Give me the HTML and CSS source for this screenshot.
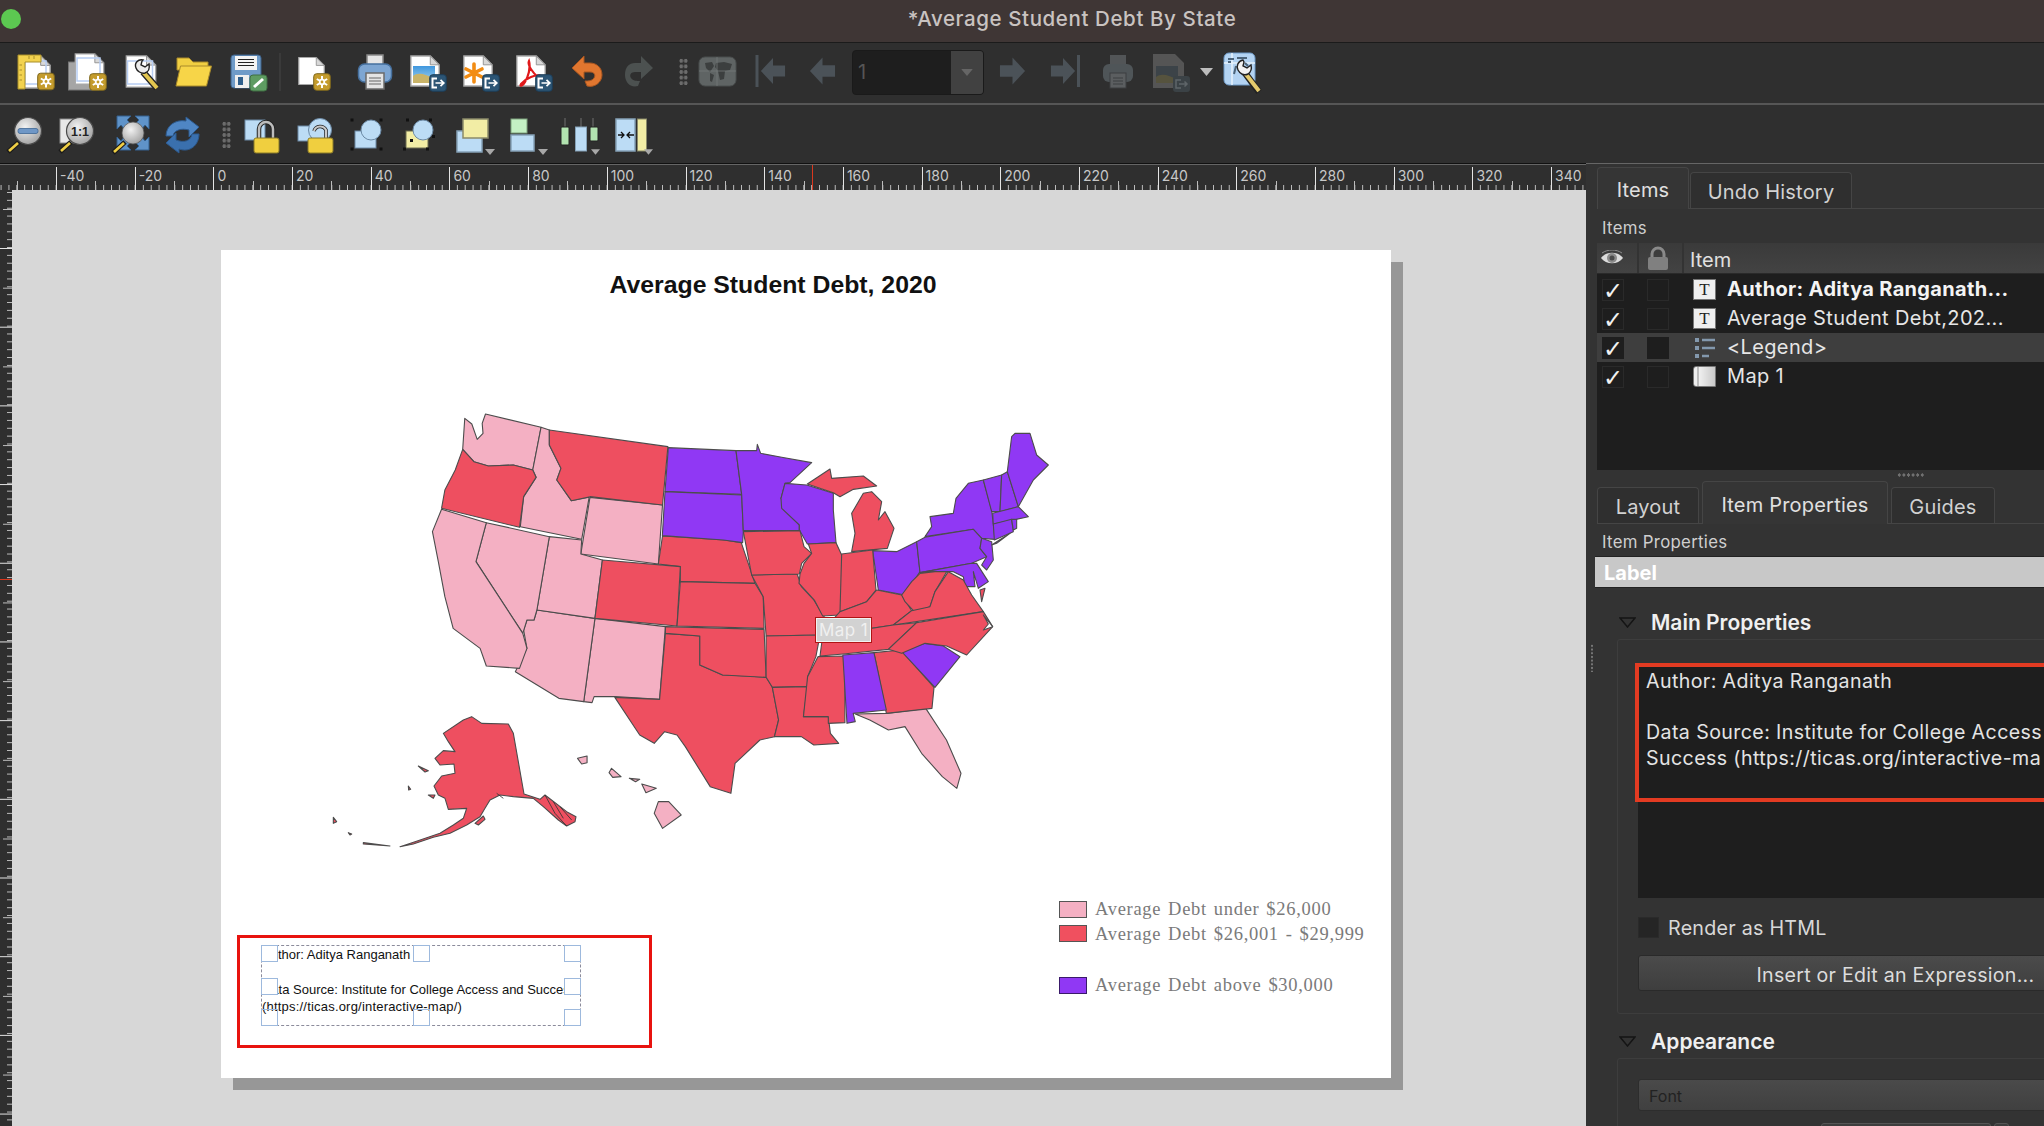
FILE: index.html
```html
<!DOCTYPE html>
<html lang="en">
<head>
<meta charset="utf-8">
<title>*Average Student Debt By State</title>
<link rel="stylesheet" href="styles.css">
</head>
<body>
<svg class="defs" aria-hidden="true">
  <defs>
    <radialGradient id="lensFill" cx="40%" cy="35%" r="75%"><stop offset="0" stop-color="#f2f2f2"/><stop offset="1" stop-color="#9a9a9a"/></radialGradient>
    <linearGradient id="sky" x1="0" y1="0" x2="0" y2="1"><stop offset="0" stop-color="#3f97de"/><stop offset="1" stop-color="#a8d4f0"/></linearGradient>
    <symbol id="doc" viewBox="0 0 34 36"><path d="M1 1H23L33 11V35H1Z" fill="#fff" stroke="#a8a8a8" stroke-width="1.5"/><path d="M23 1V11H33Z" fill="#d8d8d8" stroke="#8c8c8c"/></symbol>
    <symbol id="gear" viewBox="0 0 18 18"><rect x=".7" y=".7" width="16.6" height="16.6" rx="3" fill="#c49c2d" stroke="#7e671d"/><path d="M9 3V15M3.8 6L14.2 12M3.8 12L14.2 6" stroke="#fff" stroke-width="2"/><circle cx="9" cy="9" r="3.2" fill="#fff"/><circle cx="9" cy="9" r="1.4" fill="#c49c2d"/></symbol>
    <symbol id="export" viewBox="0 0 18 18"><rect x=".7" y=".7" width="16.6" height="16.6" rx="3" fill="#2c5575" stroke="#1d3e58"/><path d="M8 4.5H3.5V13.5H8" fill="none" stroke="#fff" stroke-width="2"/><path d="M6.5 9H14.5M11.5 5.8L14.8 9L11.5 12.2" fill="none" stroke="#fff" stroke-width="1.7"/></symbol>
    <symbol id="lens" viewBox="0 0 40 40"><path d="M14 27L3 37" stroke="#1a1a1a" stroke-width="5"/><path d="M13 28L4 36" stroke="#f0cf45" stroke-width="2.6"/><circle cx="23" cy="16" r="13.5" fill="url(#lensFill)" stroke="#4a4a4a" stroke-width="1.2"/></symbol>
    <symbol id="tri" viewBox="0 0 10 6"><path d="M0 0H10L5 6Z" fill="#a8a8a8"/></symbol>
    <symbol id="arrowR" viewBox="0 0 28 30"><path d="M1 9H14V1L27 15L14 29V21H1Z" fill="#4b5258"/></symbol>
  </defs>
</svg>

<header class="titlebar">
  <span class="traffic"></span>
  <h1 class="window-title">*Average Student Debt By State</h1>
</header>

<div class="toolbar toolbar-top">
  <svg class="ti gap16" viewBox="0 0 40 40"><use href="#doc" x="2" y="3" width="34" height="34"/><rect x="9" y="9" width="21" height="23" fill="none" stroke="#b7cdf2" stroke-width="1.5"/><path d="M2 3H25V10H9V37H2Z" fill="#f2d24f" stroke="#a98f2a"/><path d="M3.5 13H6M3.5 18H6M3.5 23H6M3.5 28H6M13 4V7M18 4V7" stroke="#a98f2a"/><use href="#gear" x="21" y="20" width="18" height="19"/></svg>
  <svg class="ti gap11" viewBox="0 0 40 40"><rect x="1.5" y="10" width="30" height="28" fill="#a5a5a5" stroke="#777"/><use href="#doc" x="6" y="1" width="33" height="32"/><rect x="10" y="6" width="23" height="23" fill="none" stroke="#b7cdf2" stroke-width="1.5"/><use href="#gear" x="22" y="21" width="18" height="18"/></svg>
  <svg class="ti gap15" viewBox="0 0 40 40"><use href="#doc" x="2" y="3" width="34" height="33"/><rect x="5.500" y="9" width="25" height="23" fill="none" stroke="#b7cdf2" stroke-width="1.5"/><path d="M21 20L35 36" stroke="#222" stroke-width="6.500"/><path d="M21 20L35 36" stroke="#e3c64f" stroke-width="4"/><path d="M21 8C16 7 12 11 14 16C15 19 19 22 23 21C26 20 28 17 27 12L23 15L19 13L20 9Z" fill="#ececec" stroke="#222" stroke-width="1.4"/></svg>
  <svg class="ti gap11" viewBox="0 0 40 40"><path d="M4 6H16L20 10H35V18H4Z" fill="#f1cf42" stroke="#a98a2a"/><path d="M7.500 14H38.500L33.500 34H3Z" fill="#f7d548" stroke="#a98a2a"/></svg>
  <svg class="ti gap15" viewBox="0 0 40 40"><rect x="3" y="3" width="30" height="33" rx="3" fill="#6f9bc8" stroke="#3e628a"/><rect x="7" y="4" width="22" height="14" fill="#f4f4f4"/><path d="M10 7.500H26M10 10.500H26M10 13.500H26" stroke="#222"/><rect x="7" y="23" width="14" height="13" fill="#efefef"/><rect x="10" y="25" width="5" height="8" fill="#2f5f8c"/><rect x="22" y="23" width="17" height="16" rx="3" fill="#5e9c62" stroke="#3e6e42"/><path d="M26 35L35 27" stroke="#fff" stroke-width="3"/></svg>
  <span class="tsep gap11"></span>
  <svg class="ti gap12" viewBox="0 0 40 40"><use href="#doc" x="5" y="2" width="27" height="34"/><use href="#gear" x="20" y="21" width="18" height="18"/></svg>
  <svg class="ti gap21" viewBox="0 0 40 40"><rect x="13" y="3" width="16" height="13" fill="#e6e6e6" stroke="#8a8a8a" stroke-width="1.5"/><rect x="4.500" y="12" width="33" height="18" rx="6" fill="#7ea6d2" stroke="#46709e" stroke-width="1.5"/><rect x="12" y="21" width="18" height="16" fill="#e4e4e4" stroke="#6b6b6b" stroke-width="1.5"/><path d="M15 26H27M15 29H27M15 32H27" stroke="#666" stroke-width="1.2"/></svg>
  <svg class="ti gap14" viewBox="0 0 40 40"><use href="#doc" x="2" y="2" width="30" height="34"/><rect x="5" y="14" width="22" height="17" fill="url(#sky)"/><path d="M5 31V24C10 20 17 22 27 27V31Z" fill="#c9b469"/><use href="#export" x="21" y="22" width="18" height="18"/></svg>
  <svg class="ti gap13" viewBox="0 0 40 40"><use href="#doc" x="2" y="2" width="30" height="34"/><path d="M13 12V30M5 17L21 25M5 25L21 17" stroke="#f28c13" stroke-width="3.600" stroke-linecap="round"/><use href="#export" x="21" y="22" width="18" height="18"/></svg>
  <svg class="ti gap13" viewBox="0 0 40 40"><use href="#doc" x="2" y="2" width="30" height="34"/><path d="M15 9C13 13 19 21 24 25C26 26 29 26 27 24C22 22 12 26 7 32C5 35 9 34 11 30C14 25 17 16 15 9Z" fill="none" stroke="#e0191b" stroke-width="2.200"/><use href="#export" x="21" y="22" width="18" height="18"/></svg>
  <svg class="ti gap12" viewBox="0 0 40 40"><path d="M18 4L6 16L18 27V20H24C28 20 30 23 28 26C26 29 22 29 19 29L21 34C29 36 36 30 36 23C36 15 30 11 24 11H18Z" fill="#e0762f" stroke="#a85620"/></svg>
  <svg class="ti gap14" viewBox="0 0 40 40"><path d="M21 4L33 16L21 27V20H15C11 20 9 23 11 26C13 29 17 29 20 29L18 34C10 36 5 30 5 23C5 15 9 11 15 11H21Z" fill="#4c5150"/></svg>
  <span class="grip gap19"></span>
  <svg class="ti gap9" viewBox="0 0 40 40"><rect x="2" y="5" width="37" height="29" rx="6" fill="#5f6464" stroke="#4a4e4e"/><path d="M8 11L15 10L17 14L13 20L9 16ZM19 11L27 10L35 12L33 18L28 19L27 27L23 28L21 19L18 15ZM13 21L17 23L15 30L13 29Z" fill="#3c3f3f"/><path d="M2 19H39M20 5V34" stroke="#757a7a" stroke-width=".8"/></svg>
  <svg class="ti gap14" viewBox="0 0 40 40"><rect x="4.500" y="3" width="3" height="32" fill="#4b5258"/><use href="#arrowR" x="9" y="4" width="26" height="30" transform="rotate(180 22 19)"/></svg>
  <svg class="ti gap11" viewBox="0 0 40 40"><use href="#arrowR" x="7" y="4" width="27" height="30" transform="rotate(180 20.500 19)"/></svg>
  <div class="pager gap10"><span class="pager-value">1</span><span class="pager-btn"><svg class="pager-arrow" viewBox="0 0 10 6"><use href="#tri"/></svg></span></div>
  <svg class="ti gap8" viewBox="0 0 40 40"><use href="#arrowR" x="7" y="4" width="27" height="30"/></svg>
  <svg class="ti gap13" viewBox="0 0 40 40"><use href="#arrowR" x="5" y="4" width="26" height="30"/><rect x="32" y="3" width="3" height="32" fill="#4b5258"/></svg>
  <svg class="ti gap13" viewBox="0 0 40 40"><rect x="12" y="3" width="16" height="13" fill="#525557"/><rect x="5" y="12" width="30" height="18" rx="6" fill="#4f5558"/><rect x="12" y="21" width="16" height="15" fill="#5b5e60" stroke="#3c3e40"/><path d="M15 26H25M15 29H25M15 32H25" stroke="#3c3e40"/></svg>
  <svg class="ti gap13" viewBox="0 0 40 40"><path d="M2 2H24L33 11V36H2Z" fill="#555"/><rect x="5" y="14" width="22" height="17" fill="#3c4348"/><path d="M5 31V25C10 21 18 23 27 28V31Z" fill="#56533e"/><rect x="22" y="24" width="17" height="16" rx="3" fill="#3b4246"/><path d="M30 28H25V36H30M28 32H36M33.500 29.500L36 32L33.500 34.500" fill="none" stroke="#5f6569" stroke-width="1.500"/></svg>
  <svg class="menu-arrow gap9" viewBox="0 0 10 6"><path d="M0 0H10L5 6Z" fill="#bdbdbd"/></svg>
  <svg class="ti gap10" viewBox="0 0 40 40"><rect x="1" y="1" width="31" height="32" rx="5" fill="#b3d3f2" stroke="#6f9bc8"/><path d="M9 1V33M1 11H32" stroke="#e6f2fb" stroke-width="1.500"/><path d="M5 7H11M14 6H24M13 14L11 22M22 11L25 14M5 10H8" stroke="#4c647a" stroke-width="2"/><path d="M22 21L36 40" stroke="#222" stroke-width="6.500"/><path d="M22 21L36 39" stroke="#e5ca6c" stroke-width="4"/><path d="M20 8C15 9 13 14 15 18C17 22 21 24 25 22C28 20 29 17 28 13L24 16L20 14L21 10Z" fill="#f2f2f2" stroke="#222" stroke-width="1.400"/></svg>
</div>

<div class="toolbar toolbar-bottom">
  <svg class="ti gap5" viewBox="0 0 40 40"><use href="#lens" width="40" height="40"/><rect x="13" y="13.500" width="20" height="5" rx="2" fill="#6f97c6" stroke="#3f6794" stroke-width=".8"/></svg>
  <svg class="ti gap12" viewBox="0 0 40 40"><rect x="3" y="4" width="19" height="24" fill="#e8e8e8" stroke="#8a8a8a"/><use href="#lens" width="40" height="40"/><text class="lens-text" x="23" y="21">1:1</text></svg>
  <svg class="ti gap13" viewBox="0 0 40 40"><g fill="#5f93c9" stroke="#34618f"><polygon points="7,1 21,1 17,5 21,9 15,15 11,10 7,14"/><polygon points="39,1 25,1 29,5 25,9 31,15 35,10 39,14"/><polygon points="7,35 21,35 17,31 21,27 15,21 11,26 7,22"/><polygon points="39,35 25,35 29,31 25,27 31,21 35,26 39,22"/></g><path d="M15 27L3 38" stroke="#1a1a1a" stroke-width="5"/><path d="M14 28L4 37" stroke="#f0cf45" stroke-width="2.600"/><circle cx="23" cy="18" r="11" fill="url(#lensFill)" stroke="#555" stroke-width=".8"/></svg>
  <svg class="ti gap13" viewBox="0 0 40 40"><path d="M3 21C3 11 12 4 23 6V2L36 12L26 22V15C18 13 11 15 10 21Z" fill="#4f86c4" stroke="#2d5a8e"/><path d="M36 19C36 30 27 38 16 34V38L3 28L13 18V25C21 28 28 26 29 19Z" fill="#3a70ae" stroke="#2d5a8e"/></svg>
  <span class="grip gap19"></span>
  <svg class="ti gap11" viewBox="0 0 40 40"><rect x="3" y="5" width="20" height="20" fill="#bcdcf5" stroke="#6c8aa6"/><path d="M17 24V14A7 7 0 0 1 31 14V24" fill="none" stroke="#222" stroke-width="4.500"/><path d="M17 24V14A7 7 0 0 1 31 14V24" fill="none" stroke="#bdbdbd" stroke-width="2.500"/><rect x="12" y="23" width="25" height="15" rx="2" fill="#f0cf3f" stroke="#8a7a28"/></svg>
  <svg class="ti gap13" viewBox="0 0 40 40"><rect x="3" y="11" width="15" height="15" fill="#bcdcf5" stroke="#6c8aa6"/><circle cx="25" cy="15" r="11.500" fill="#bcdcf5" stroke="#6c8aa6"/><path d="M19 16A6.500 6.500 0 0 1 31 15V24" fill="none" stroke="#222" stroke-width="3.500"/><path d="M19 16A6.500 6.500 0 0 1 31 15V24" fill="none" stroke="#c9c9c9" stroke-width="2"/><rect x="13" y="23" width="25" height="15" rx="2" fill="#f0cf3f" stroke="#8a7a28"/></svg>
  <svg class="ti gap12" viewBox="0 0 40 40"><rect x="8" y="16" width="21" height="17" fill="#bcdcf5" stroke="#6c8aa6"/><circle cx="24" cy="15" r="10" fill="#bcdcf5" stroke="#6c8aa6"/><g fill="#111"><rect x="3.500" y="3.500" width="3" height="3"/><rect x="32.500" y="3.500" width="3" height="3"/><rect x="3.500" y="32.500" width="3" height="3"/><rect x="32.500" y="32.500" width="3" height="3"/></g></svg>
  <svg class="ti gap13" viewBox="0 0 40 40"><rect x="6" y="16" width="22" height="17" fill="#f2eda5" stroke="#6c6c50"/><circle cx="23" cy="15" r="10" fill="#bcdcf5" stroke="#6c8aa6"/><g fill="#111"><rect x="6" y="3.500" width="3" height="3"/><rect x="29" y="3.500" width="3" height="3"/><rect x="3" y="32.500" width="3" height="3"/><rect x="26" y="32.500" width="3" height="3"/><rect x="32" y="20" width="3" height="3"/><rect x="10" y="24" width="3" height="3"/></g></svg>
  <svg class="ti gap16" viewBox="0 0 40 40"><rect x="1" y="16" width="25" height="21" fill="#bcdcf5" stroke="#86a2b8" stroke-width="1.500"/><rect x="7" y="4" width="25" height="19" fill="#f2eda5" stroke="#8a8a6a" stroke-width="1.500"/><use href="#tri" x="29" y="34" width="10" height="6"/></svg>
  <svg class="ti gap14" viewBox="0 0 40 40"><rect x="1" y="4" width="16" height="14" fill="#c4f0c4" stroke="#7fa37f"/><rect x="1" y="20" width="23" height="16" fill="#bcdcf5" stroke="#86a2b8" stroke-width="1.500"/><use href="#tri" x="28" y="34" width="10" height="6"/></svg>
  <svg class="ti gap10" viewBox="0 0 40 40"><path d="M5 3V12M21 3V12M33 3V12" stroke="#666" stroke-width="1.200"/><rect x="1" y="12" width="8" height="18" rx="1" fill="#b2e3b0" stroke="#222"/><rect x="15.500" y="12" width="11" height="24" fill="#bcdcf5" stroke="#86a2b8"/><rect x="30" y="12" width="8" height="14" rx="1" fill="#b2e3b0" stroke="#222"/><use href="#tri" x="31" y="34" width="9" height="6"/></svg>
  <svg class="ti gap15" viewBox="0 0 40 40"><rect x="1" y="4" width="19" height="32" fill="#bcdcf5" stroke="#86a2b8" stroke-width="1.500"/><rect x="22.500" y="4" width="9" height="32" fill="#f2eda5" stroke="#8a8a6a"/><path d="M3 20H9M6 17L9 20L6 23M19 20H12M15 17L12 20L15 23" fill="none" stroke="#111" stroke-width="1.300"/><use href="#tri" x="29" y="34" width="9" height="6"/></svg>
</div>

<div class="workspace">
  <section class="designer">
    <div class="h-ruler">
      <span class="tick-cell"></span>
      <span class="tick-cell">-40</span>
      <span class="tick-cell">-20</span>
      <span class="tick-cell">0</span>
      <span class="tick-cell">20</span>
      <span class="tick-cell">40</span>
      <span class="tick-cell">60</span>
      <span class="tick-cell">80</span>
      <span class="tick-cell">100</span>
      <span class="tick-cell">120</span>
      <span class="tick-cell">140</span>
      <span class="tick-cell">160</span>
      <span class="tick-cell">180</span>
      <span class="tick-cell">200</span>
      <span class="tick-cell">220</span>
      <span class="tick-cell">240</span>
      <span class="tick-cell">260</span>
      <span class="tick-cell">280</span>
      <span class="tick-cell">300</span>
      <span class="tick-cell">320</span>
      <span class="tick-cell">340</span>
      <i class="ruler-mark-x"></i>
    </div>
    <div class="designer-body">
      <div class="v-ruler"><i class="ruler-mark-y"></i></div>
      <div class="canvas">
        <article class="sheet">
          <h2 class="sheet-title">Average Student Debt, 2020</h2>

          <svg class="map" viewBox="300 400 800 480" aria-label="Map of average student debt by US state">
            <g transform="translate(420 400) scale(.41454 .33333)">
              <g class="pink">
                <polygon points="108,55 125,72 138,118 152,100 150,70 158,42 292,82 272,210 225,195 165,198 130,185 103,148"/>
                <polygon points="292,82 312,90 312,135 340,205 330,240 365,302 408,292 390,418 242,380 250,290 280,232 272,210"/>
                <polygon points="410,292 585,315 575,492 388,462"/>
                <polygon points="422,655 592,680 578,898 470,890 420,890 415,908 395,905"/>
                <polygon points="282,630 422,655 395,905 335,895 230,815 240,790 258,745 250,690 258,660 275,660"/>
                <polygon points="312,410 390,420 388,462 440,480 422,655 282,630"/>
                <polygon points="160,368 312,410 282,630 275,660 258,660 248,700 135,485"/>
                <polygon points="52,328 160,368 135,485 248,700 258,745 240,805 160,798 145,745 80,685 60,590 45,490 30,395"/>
                <polygon points="1050,942 1125,940 1220,925 1270,1020 1305,1120 1295,1165 1260,1130 1210,1060 1170,980 1130,990 1085,960"/>
                <polygon points="575,1205 600,1205 630,1245 585,1285 565,1240"/>
                <polygon points="535,1152 570,1165 545,1178"/>
                <polygon points="462,1105 485,1130 465,1132 456,1118"/>
                <polygon points="380,1075 403,1068 403,1088 390,1092"/>
                <polygon points="505,1135 530,1138 520,1145"/>
              </g>
              <g class="red">
                <polygon points="103,148 130,185 165,198 225,195 272,210 280,232 250,290 240,382 52,325 60,270 85,210"/>
                <polygon points="312,90 598,140 585,315 410,290 365,302 330,240 340,205 312,135"/>
                <polygon points="585,408 735,420 775,428 808,550 628,545 628,500 575,492"/>
                <polygon points="440,480 628,500 620,678 422,655"/>
                <polygon points="628,545 808,550 828,590 830,685 620,678"/>
                <polygon points="592,700 675,708 675,795 730,825 790,828 835,832 850,862 865,960 855,1010 820,1020 760,1090 750,1180 700,1160 640,1040 620,1005 590,995 565,1030 530,1005 470,892 578,898"/>
                <polygon points="592,680 830,688 835,832 730,825 675,795 675,708 592,700"/>
                <polygon points="800,525 910,522 920,560 950,600 975,650 955,705 835,708 828,590"/>
                <polygon points="835,708 965,705 955,770 935,830 935,860 850,862 835,832"/>
                <polygon points="850,862 935,860 925,950 985,950 990,1000 1010,1030 950,1035 920,1010 855,1010 865,960"/>
                <polygon points="960,770 1025,768 1025,968 985,970 985,950 925,950 935,830"/>
                <polygon points="1095,758 1160,750 1240,862 1235,925 1125,940"/>
              </g>
              <polygon class="purple" points="1020,765 1095,758 1125,930 1045,940 1050,965 1030,970"/>
            </g>
            <g transform="translate(600 400) scale(.33333)">
              <g class="purple">
                <polygon points="205,143 408,152 425,283 195,275"/>
                <polygon points="195,275 425,285 430,395 428,428 370,420 187,407"/>
                <polygon points="408,152 470,152 472,133 482,160 545,172 635,188 570,248 555,250 543,295 598,375 598,392 430,392 425,283"/>
                <polygon points="555,250 620,255 700,280 700,330 708,428 622,432 598,390 598,375 545,325 543,295"/>
                <polygon points="818,452 890,455 950,425 960,515 915,585 835,570"/>
                <polygon points="905,755 975,730 1030,738 1080,770 1005,862"/>
                <polygon points="990,350 1060,340 1068,295 1105,250 1150,240 1175,330 1185,418 1145,415 1120,388 975,410 995,380"/>
                <polygon points="950,425 975,412 1120,388 1145,415 1140,445 1160,470 1115,490 960,518"/>
                <polygon points="1145,415 1175,425 1180,480 1160,510 1145,495 1160,470 1140,445"/>
                <polygon points="960,518 1115,490 1130,490 1165,545 1135,565 1120,515 1125,560 1095,560 1090,530 1060,515 1005,515"/>
                <polygon points="1150,240 1205,225 1200,335 1175,335"/>
                <polygon points="1205,225 1222,215 1255,320 1200,335"/>
                <polygon points="1235,110 1245,100 1290,100 1310,165 1345,195 1300,240 1255,320 1222,215"/>
                <polygon points="1178,340 1255,320 1285,350 1240,360 1180,372"/>
                <polygon points="1180,372 1235,358 1240,395 1183,420"/>
                <polygon points="1235,358 1250,358 1250,385 1240,390"/>
                <polygon points="1175,435 1230,400 1190,430"/>
              </g>
              <g class="red">
                <polygon points="430,395 600,392 612,440 635,460 605,490 598,522 455,525"/>
                <polygon points="622,252 690,207 695,235 790,228 830,258 760,268 720,290 700,278"/>
                <polygon points="755,455 765,400 755,340 790,280 815,275 845,305 835,360 855,335 882,385 862,445"/>
                <polygon points="625,432 708,428 725,465 733,600 718,645 668,648 643,600 597,550 600,522 612,490 635,460"/>
                <polygon points="725,462 818,450 828,570 800,605 720,635"/>
                <polygon points="720,635 800,605 830,570 905,585 935,632 880,675 655,708"/>
                <polygon points="905,585 935,545 960,520 1005,515 1040,515 1005,575 990,620 945,637 915,605"/>
                <polygon points="880,675 935,632 990,620 1005,575 1045,515 1090,540 1115,585 1150,635"/>
                <polygon points="660,768 668,708 880,675 950,668 865,748 730,762"/>
                <polygon points="950,668 1150,635 1178,680 1100,765 1040,738 975,730 905,760 865,748"/>
                <polygon points="1140,570 1155,565 1145,605"/>
              </g>
              <polygon class="sliver" points="1150,645 1178,680 1150,690 1165,672"/>
            </g>
            <g class="red" transform="translate(300 700) scale(.33333)">
              <polygon points="430,100 490,60 515,50 545,70 625,72 640,100 672,282 720,298 735,285 800,335 828,350 825,365 800,378 775,360 730,320 700,295 640,290 600,285 570,300 555,325 540,350 500,375 450,400 400,412 340,432 300,440 345,425 420,400 460,375 490,355 500,325 445,328 435,295 415,285 402,258 425,228 465,220 462,192 420,195 405,175 430,152 465,155 445,125"/>
              <polygon points="355,198 385,212 375,216"/>
              <polygon points="385,285 405,285 400,295"/>
              <polygon points="525,370 550,348 555,358 535,375"/>
              <polygon points="190,428 270,438 190,432"/>
              <polygon points="145,398 155,402 150,405"/>
              <polygon points="100,352 110,365 100,370"/>
              <polygon points="325,258 332,268 326,270"/>
              <path class="coast" d="M735 285L765 340L800 378M760 305L790 355M780 320L815 360M590 280L610 295"/>
            </g>
          </svg>
          <span class="map-tag">Map 1</span>

          <ul class="legend">
            <li class="legend-row"><span class="swatch swatch-low"></span>Average Debt under $26,000</li>
            <li class="legend-row"><span class="swatch swatch-mid"></span>Average Debt $26,001 - $29,999</li>
            <li class="legend-row legend-row-far"><span class="swatch swatch-high"></span>Average Debt above $30,000</li>
          </ul>

          <div class="callout"></div>
          <div class="label-item">
            <p class="label-text">Author: Aditya Ranganath<br><br>Data Source: Institute for College Access and Success<br><span class="label-url">(https://ticas.org/interactive-map/)</span></p>
            <i class="handle h-tl"></i><i class="handle h-tm"></i><i class="handle h-tr"></i>
            <i class="handle h-ml"></i><i class="handle h-mr"></i>
            <i class="handle h-bl"></i><i class="handle h-bm"></i><i class="handle h-br"></i>
          </div>
        </article>
      </div>
    </div>
  </section>

  <aside class="panel">
    <div class="tabs tabs-top">
      <span class="tab tab-active tab-items">Items</span>
      <span class="tab tab-undo">Undo History</span>
    </div>
    <div class="dock-title dock-title-items">Items</div>
    <div class="tree-head">
      <span class="col col-eye"><svg class="head-icon" viewBox="0 0 24 16"><path d="M1 8C6 1 18 1 23 8C18 15 6 15 1 8Z" fill="#dcdcdc"/><circle cx="12" cy="8" r="5" fill="#8b8b8b"/><circle cx="12" cy="8" r="2.500" fill="#4a4a4a"/><path d="M2 3C8 -1 16 -1 22 3" fill="none" stroke="#8a8a8a"/></svg></span>
      <span class="col col-lock"><svg class="head-icon-lock" viewBox="0 0 20 24"><path d="M4 11V8A6 6 0 0 1 16 8V11" fill="none" stroke="#8a8a8a" stroke-width="3"/><rect x="0" y="11" width="20" height="13" rx="2" fill="#808080"/></svg></span>
      <span class="col col-item">Item</span>
    </div>
    <div class="tree-list">
      <div class="tree-row">
        <span class="box box-check">✓</span><span class="box"></span>
        <span class="type-t">T</span><span class="row-text row-strong">Author: Aditya Ranganath...</span>
      </div>
      <div class="tree-row">
        <span class="box box-check">✓</span><span class="box"></span>
        <span class="type-t">T</span><span class="row-text">Average Student Debt,202...</span>
      </div>
      <div class="tree-row tree-row-selected">
        <span class="box box-check">✓</span><span class="box"></span>
        <svg class="type-svg" viewBox="0 0 23 23"><path d="M2 2H6V6H2ZM2 10H6V14H2ZM2 18H6V22H2Z" fill="#8398ad"/><path d="M9 4H22M9 12H22M9 20H16" stroke="#8398ad" stroke-width="2.600"/></svg>
        <span class="row-text">&lt;Legend&gt;</span>
      </div>
      <div class="tree-row">
        <span class="box box-check">✓</span><span class="box"></span>
        <span class="type-map"></span><span class="row-text">Map 1</span>
      </div>
    </div>
    <div class="splitter"><span class="splitter-dots"></span></div>
    <div class="tabs tabs-bottom">
      <span class="tab tab-layout">Layout</span>
      <span class="tab tab-active tab-props">Item Properties</span>
      <span class="tab tab-guides">Guides</span>
    </div>
    <div class="dock-title dock-title-props">Item Properties</div>
    <div class="item-type">Label</div>

    <div class="section-head section-main"><svg class="caret" viewBox="0 0 17 11"><path d="M1 1H16L8.500 10Z" fill="none" stroke="#151515" stroke-width="1.500"/></svg>Main Properties</div>
    <div class="group group-main">
      <div class="text-field">
        <div class="text-value">Author: Aditya Ranganath<br><br>Data Source: Institute for College Access<br>Success (https://ticas.org/interactive-ma</div>
        <i class="annotation"></i>
      </div>
      <div class="check-row"><span class="box box-big"></span>Render as HTML</div>
      <button class="wide-button" type="button">Insert or Edit an Expression...</button>
    </div>

    <div class="section-head section-appearance"><svg class="caret" viewBox="0 0 17 11"><path d="M1 1H16L8.500 10Z" fill="none" stroke="#151515" stroke-width="1.500"/></svg>Appearance</div>
    <div class="group group-appearance">
      <div class="font-field">Font</div>
      <div class="small-row"><span class="small-a"></span><span class="small-b"></span></div>
    </div>
    <span class="dock-grip"></span>
  </aside>
</div>
</body>
</html>
```

FILE: styles.css
```css
* { box-sizing: border-box; }
html, body { margin: 0; padding: 0; }
body {
  width: 2044px;
  height: 1126px;
  overflow: hidden;
  background: #2f2f2f;
  font-family: Inter, "Liberation Sans", sans-serif;
  color: #e4e4e4;
  display: flex;
  flex-direction: column;
}
.defs { position: absolute; width: 0; height: 0; }

/* title bar */
.titlebar {
  position: relative;
  flex: 0 0 43px;
  height: 43px;
  background: #3f3635;
  border-bottom: 1px solid #1b1b1b;
  display: flex;
  align-items: center;
  justify-content: center;
}
.traffic {
  position: absolute;
  left: 1px;
  top: 9px;
  width: 20px;
  height: 20px;
  border-radius: 50%;
  background: #5cc851;
}
.window-title {
  margin: 0 0 6px 100px;
  font-size: 20.5px;
  font-weight: 500;
  letter-spacing: .6px;
  color: #c9c3c1;
}

/* toolbars */
.toolbar {
  display: flex;
  align-items: center;
  background: #2f2f2f;
}
.toolbar-top { flex: 0 0 62px; padding-bottom: 2px; border-bottom: 2px solid #565656; }
.toolbar-bottom { flex: 0 0 59px; padding-top: 2px; border-bottom: 1px solid #111; }
.ti { flex: 0 0 40px; width: 40px; height: 40px; overflow: visible; }
.lens-text { font: 700 12.5px "Liberation Sans", sans-serif; fill: #222; text-anchor: middle; }
.gap5 { margin-left: 5px; }
.gap8 { margin-left: 8px; }
.gap9 { margin-left: 9px; }
.gap10 { margin-left: 10px; }
.gap11 { margin-left: 11px; }
.gap12 { margin-left: 12px; }
.gap13 { margin-left: 13px; }
.gap14 { margin-left: 14px; }
.gap15 { margin-left: 15px; }
.gap16 { margin-left: 16px; }
.gap19 { margin-left: 19px; }
.gap21 { margin-left: 21px; }
.tsep { width: 2px; height: 38px; background: #3a3a3a; }
.grip {
  flex: 0 0 9px;
  width: 9px;
  height: 28px;
  background-image: radial-gradient(circle, #6c6c6c 1.7px, transparent 2px);
  background-size: 4.5px 5.6px;
}
.pager {
  flex: 0 0 132px;
  height: 45px;
  display: flex;
  border: 1px solid #1a1a1a;
  border-radius: 4px;
  overflow: hidden;
  background: #1e1e1e;
}
.pager-value { flex: 1; padding-left: 5px; font-size: 20px; line-height: 43px; color: #555; }
.pager-btn { flex: 0 0 32px; background: #414141; display: flex; align-items: center; justify-content: center; }
.pager-arrow { width: 12px; height: 7px; opacity: .35; }
.menu-arrow { flex: 0 0 13px; width: 13px; height: 8px; }

/* workspace */
.workspace { flex: 1; display: flex; min-height: 0; }
.designer { flex: 0 0 1586px; width: 1586px; display: flex; flex-direction: column; min-height: 0; }
.h-ruler {
  position: relative;
  flex: 0 0 26px;
  display: flex;
  overflow: hidden;
  border-top: 1px solid #666;
  padding-top: 2px;
  background: #2f2f2f;
}
.h-ruler .tick-cell:first-child { margin-left: -22.7px; }
.tick-cell {
  flex: 0 0 78.7px;
  padding-left: 4px;
  font-size: 14px;
  line-height: 17px;
  color: #c8c8c8;
  background-image:
    linear-gradient(#e4e4e4, #e4e4e4),
    linear-gradient(#bdbdbd, #bdbdbd),
    linear-gradient(to right, #bdbdbd 1px, transparent 1px);
  background-size: 1px 100%, 1px 9px, 7.87px 5px;
  background-position: 0 0, 39.35px 100%, 0 100%;
  background-repeat: no-repeat, no-repeat, repeat-x;
}
.ruler-mark-x { position: absolute; left: 812px; top: 0; bottom: 0; width: 1px; background: #d9381e; }
.designer-body { flex: 1; display: flex; min-height: 0; }
.v-ruler {
  position: relative;
  flex: 0 0 12px;
  background-image: linear-gradient(#bdbdbd 1px, transparent 1px);
  background-size: 5px 7.87px;
  background-position: 100% 2px;
  background-repeat: repeat-y;
}
.v-ruler::before {
  content: "";
  position: absolute;
  inset: 0;
  background-image: linear-gradient(#e4e4e4 1px, transparent 1px), linear-gradient(#bdbdbd 1px, transparent 1px);
  background-size: 100% 78.7px, 9px 78.7px;
  background-position: 0 58px, 100% 19px;
  background-repeat: repeat-y;
}
.ruler-mark-y { position: absolute; left: 0; right: 0; top: 389px; height: 1px; background: #d9381e; }
.canvas { flex: 1; background: #d7d7d7; padding: 60px 0 0 209px; overflow: hidden; }

/* sheet */
.sheet {
  position: relative;
  width: 1170px;
  height: 828px;
  background: #fff;
  box-shadow: 12px 12px 0 #979797;
}
.sheet-title {
  margin: 0;
  padding-top: 20px;
  text-align: center;
  font: 700 24.8px/30px "Liberation Sans", Arial, sans-serif;
  color: #111;
  position: relative;
  left: -33px;
}
.map { position: absolute; left: 79px; top: 150px; width: 800px; height: 480px; overflow: visible; }
.map polygon { stroke: #4c4c4c; stroke-width: 1.1; vector-effect: non-scaling-stroke; stroke-linejoin: round; }
.map .sliver { fill: #fff; }
.map .coast { fill: none; stroke: #333; stroke-width: 2.5; }
.pink { fill: #f4b0c3; }
.red { fill: #ee4f60; }
.purple { fill: #9038f4; }
.map-tag {
  position: absolute;
  left: 594px;
  top: 367px;
  width: 57px;
  height: 26px;
  border: 1px solid #b01414;
  outline: 1px solid #f2f2f2;
  outline-offset: -2px;
  background: #d2d2d2;
  color: #f0f0f0;
  font-size: 17px;
  line-height: 24px;
  text-align: center;
  letter-spacing: .4px;
}
.legend { position: absolute; left: 838px; top: 647px; margin: 0; padding: 0; list-style: none; }
.legend-row {
  display: flex;
  align-items: center;
  height: 24.5px;
  font: 400 18.5px/24.5px "Liberation Serif", serif;
  letter-spacing: .7px;
  word-spacing: 1.6px;
  color: #7a7a7a;
  white-space: nowrap;
}
.legend-row-far { margin-top: 27px; }
.swatch { flex: 0 0 28px; height: 17px; margin-right: 8px; border: 1px solid #555; }
.swatch-low { background: #f4b0c3; }
.swatch-mid { background: #f0505f; }
.swatch-high { background: #9038f4; border-color: #3a1a6a; }
.callout {
  position: absolute;
  left: 16px;
  top: 685px;
  width: 415px;
  height: 113px;
  border: 3px solid #e8130f;
}
.label-item {
  position: absolute;
  left: 40px;
  top: 695px;
  width: 320px;
  height: 81px;
  border: 1px dashed #8b8b9b;
}
.label-text {
  margin: 0;
  font: 400 13px/17.3px "Liberation Sans", Arial, sans-serif;
  color: #111;
  overflow: hidden;
  white-space: nowrap;
  height: 100%;
}
.label-url { letter-spacing: .2px; }
.handle { position: absolute; width: 17px; height: 17px; background: #fff; border: 1px solid #9db9dd; }
.h-tl { left: -1px; top: -1px; }
.h-tm { left: 151px; top: -1px; }
.h-tr { right: -1px; top: -1px; }
.h-ml { left: -1px; top: 32px; }
.h-mr { right: -1px; top: 32px; }
.h-bl { left: -1px; bottom: -1px; background: transparent; }
.h-bm { left: 151px; bottom: -1px; background: transparent; }
.h-br { right: -1px; bottom: -1px; }

/* panel */
.panel {
  position: relative;
  flex: 1;
  margin-top: -1px;
  min-width: 0;
  overflow: hidden;
  background: #333;
  padding-left: 11px;
  border-top: 1px solid #666;
  font-size: 20px;
}
.tabs { display: flex; align-items: flex-end; border-bottom: 1px solid #454545; margin-right: -11px; font-size: 20px; letter-spacing: .2px; }
.tabs-top { height: 45px; }
.tabs-bottom { height: 43px; }
.tab {
  display: block;
  background: #2f2f2f;
  border: 1px solid #454545;
  border-bottom: 0;
  border-radius: 4px 4px 0 0;
  color: #d2d2d2;
  white-space: nowrap;
  text-align: center;
}
.tab-active { background: #353535; color: #e0e0e0; }
.tab-items { width: 92px; height: 42px; line-height: 45px; margin-bottom: -1px; }
.tab-undo { width: 162px; height: 36px; line-height: 39px; margin-left: 1px; }
.tab-layout { width: 102px; height: 36px; line-height: 39px; }
.tab-props { width: 186px; height: 43px; line-height: 46px; margin: 0 3px -1px; }
.tab-guides { width: 104px; height: 36px; line-height: 39px; }
.dock-title { padding-left: 5px; font-size: 16.8px; letter-spacing: .3px; color: #cfcfcf; }
.dock-title-items { height: 34px; line-height: 39px; }
.dock-title-props { height: 32px; line-height: 37px; }
.tree-head {
  display: flex;
  height: 31px;
  background: linear-gradient(#3a3a3a, #434343);
  border-bottom: 1px solid #2a2a2a;
  margin-right: -11px;
}
.col { display: flex; align-items: center; justify-content: center; border-right: 2px solid #333; }
.col-eye { flex: 0 0 42px; padding-right: 10px; }
.col-lock { flex: 0 0 45px; padding-right: 6px; }
.col-item { flex: 1; justify-content: flex-start; padding: 4px 0 0 6px; border: 0; color: #e0e0e0; }
.head-icon { width: 24px; height: 16px; }
.head-icon-lock { width: 20px; height: 24px; }
.tree-list { height: 196px; padding-top: 1px; background: #1e1e1e; margin-right: -11px; }
.tree-row { display: flex; align-items: center; height: 29px; padding-left: 5px; }
.tree-row-selected { background: #3e3e3e; }
.tree-row-selected .box { background: #1e1e1e; border-color: #1e1e1e; }
.box {
  flex: 0 0 22px;
  width: 22px;
  height: 22px;
  margin-right: 23px;
  border: 1px solid #2a2a2a;
  background: #1e1e1e;
  font: 700 24px/22px "DejaVu Sans", sans-serif;
  text-align: center;
  color: #f2f2f2;
}
.tree-row .box + .box { margin-right: 24px; }
.type-t {
  flex: 0 0 23px;
  height: 21px;
  margin-right: 11px;
  background: #efefef;
  border: 1px solid #777;
  color: #222;
  font: 400 17px/19px "Liberation Serif", serif;
  text-align: center;
}
.type-svg { flex: 0 0 23px; width: 23px; height: 23px; margin-right: 11px; }
.type-map {
  flex: 0 0 23px;
  height: 21px;
  margin-right: 11px;
  border: 1px solid #777;
  border-radius: 3px 0 0 3px;
  background: linear-gradient(to right, #eee 3px, #8a8a8a 4px, #f0f0f0 5px, #c8c8c8);
}
.row-text { padding-bottom: 2px; font-size: 20px; letter-spacing: .35px; color: #e6e6e6; white-space: nowrap; }
.row-strong { font-weight: 700; color: #f4f4f4; letter-spacing: .32px; }
.splitter { height: 11px; position: relative; }
.splitter-dots {
  position: absolute;
  left: 300px;
  top: 3px;
  width: 28px;
  height: 4px;
  background-image: radial-gradient(circle, #707070 1.5px, transparent 1.7px);
  background-size: 4.6px 4px;
}
.item-type {
  height: 32px;
  margin-left: -2px;
  margin-right: -11px;
  padding-left: 9px;
  background: #c8c8c8;
  border: 1px solid #222;
  border-width: 1px 0;
  color: #fff;
  font-weight: 700;
  font-size: 20px;
  line-height: 32px;
}
.section-head {
  display: flex;
  align-items: center;
  font-size: 21px;
  font-weight: 600;
  color: #f0f0f0;
  padding-left: 22px;
}
.section-main { height: 51px; padding-top: 18px; }
.section-appearance { height: 44px; padding-top: 11px; }
.caret { width: 17px; height: 11px; margin-right: 15px; flex: 0 0 17px; }
.group {
  margin-left: 20px;
  margin-right: -60px;
  border: 1px solid #3d3d3d;
  border-radius: 3px;
  padding-left: 20px;
}
.group-main { height: 375px; padding-top: 26px; }
.group-appearance { height: 110px; padding-top: 20px; }
.text-field { position: relative; width: 560px; height: 232px; background: #1e1e1e; }
.text-value { padding: 3px 0 0 8px; font-size: 19.6px; line-height: 25.7px; letter-spacing: .4px; color: #e4e4e4; white-space: nowrap; }
.annotation {
  position: absolute;
  left: -3px;
  top: -3px;
  width: 600px;
  height: 139px;
  border: 4px solid #e33b22;
}
.check-row { display: flex; align-items: center; height: 21px; margin-top: 19px; font-size: 19.7px; font-weight: 400; letter-spacing: .25px; color: #d8d8d8; }
.box-big { flex: 0 0 21px; width: 21px; height: 21px; margin-right: 9px; border-color: #2a2a2a; background: #252525; }
.wide-button {
  display: block;
  width: 515px;
  height: 36px;
  margin-top: 17px;
  padding: 3px 0 0;
  border: 1px solid #2a2a2a;
  border-radius: 3px;
  background: linear-gradient(#4b4b4b, #3e3e3e);
  color: #dcdcdc;
  font: 400 19.6px/30px Inter, sans-serif;
  letter-spacing: .25px;
}
.font-field {
  width: 560px;
  height: 32px;
  padding-left: 10px;
  background: linear-gradient(#4a4a4a, #404040);
  border-radius: 3px;
  border: 1px solid #2d2d2d;
  color: #222;
  font-size: 16px;
  line-height: 33px;
}
.small-row { display: flex; gap: 3px; margin: 12px 0 0 183px; }
.small-a { width: 170px; height: 24px; border: 1px solid #555; border-radius: 3px; background: #3d3d3d; }
.small-b { width: 15px; height: 24px; border: 1px solid #555; border-radius: 3px; background: #3d3d3d; }
.dock-grip {
  position: absolute;
  left: 4px;
  top: 480px;
  width: 4px;
  height: 28px;
  background-image: radial-gradient(circle, #757575 1.1px, transparent 1.5px);
  background-size: 4px 3.7px;
}
```
